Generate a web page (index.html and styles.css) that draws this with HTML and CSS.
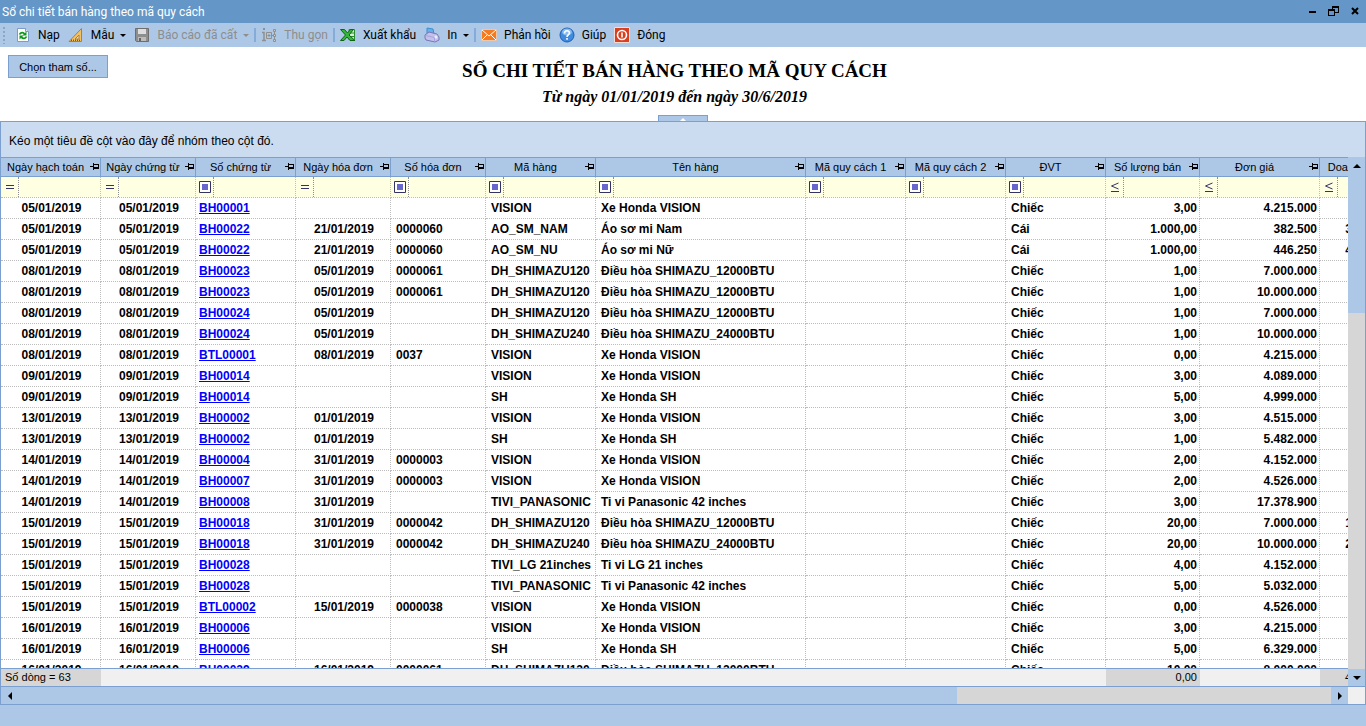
FILE: index.html
```html
<!DOCTYPE html>
<html lang="vi">
  <head>
    <meta charset="UTF-8" />
    <meta name="viewport" content="width=device-width, initial-scale=1.0" />
    <title>Sổ chi tiết bán hàng theo mã quy cách</title>
    <link rel="stylesheet" href="styles.css" />
  </head>
  <body>
    <header class="title-bar">
      <span class="title-text">Sổ chi tiết bán hàng theo mã quy cách</span>
      <div class="window-buttons">
        <button type="button" aria-label="Thu nhỏ">
          <svg width="12" height="12" viewBox="0 0 12 12"><path d="M2 5h7v2H2z" fill="#000" /></svg>
        </button>
        <button type="button" aria-label="Khôi phục">
          <svg width="12" height="12" viewBox="0 0 12 12" shape-rendering="crispEdges">
            <path d="M4 1h7v1H4zM4 0h7v1H4zM4 2h1v2H4zM10 2h1v5h-1zM7 6h4v1H7z" fill="#000" />
            <path d="M0 3h7v2H0zM0 5h1v5H0zM6 5h1v5H6zM0 9h7v1H0z" fill="#000" />
          </svg>
        </button>
        <button type="button" aria-label="Đóng cửa sổ">
          <svg width="12" height="12" viewBox="0 0 12 12"><path d="M3 2l6 6M9 2l-6 6" stroke="#000" stroke-width="2" /></svg>
        </button>
      </div>
    </header>

    <nav class="toolbar">
      <span class="grip"></span>
      <button type="button" class="tool">
        <svg width="16" height="16" viewBox="0 0 16 16">
          <path d="M2.500 1.500h8l3 3v10h-11z" fill="#fff" stroke="#7b9cc9" />
          <path d="M10.500 1.500v3h3" fill="#dce8f7" stroke="#7b9cc9" />
          <path d="M4.500 7.500c1-2.500 4-2.500 5 -.5M11.500 9.500c-1 2.500-4 2.500-5 .5" fill="none" stroke="#0a9a1a" stroke-width="1.800" />
          <path d="M11.500 4.500v4h-4zM4.500 12.500v-4h4z" fill="#0a9a1a" />
        </svg>
        <span>Nạp</span>
      </button>
      <button type="button" class="tool">
        <svg width="16" height="16" viewBox="0 0 16 16">
          <path d="M1 14.500L13.500 1.500v13z" fill="#f2c262" stroke="#bf7b25" />
          <path d="M7 12l4-4v4z" fill="#dfe3e0" stroke="#bf7b25" />
          <path d="M3.500 14v-1.500M5.500 14v-1.500M7.500 14v-1.500M9.500 14v-1.500M11.500 14v-1.500" stroke="#8a5414" />
        </svg>
        <span>Mẫu</span>
        <i class="caret"></i>
      </button>
      <button type="button" class="tool" disabled>
        <svg width="16" height="16" viewBox="0 0 16 16">
          <path d="M1.500 1.500h13v13h-12l-1-1z" fill="#8e8e8e" stroke="#6e6e6e" />
          <path d="M4 2h8v5H4z" fill="#dedede" />
          <path d="M4 10h8v4H4z" fill="#bcbcbc" />
          <path d="M5 11h2v3H5z" fill="#666" />
        </svg>
        <span>Báo cáo đã cất</span>
        <i class="caret"></i>
      </button>
      <span class="separator"></span>
      <button type="button" class="tool" disabled>
        <svg width="16" height="16" viewBox="0 0 16 16" fill="none" stroke="#8f8f8f">
          <path d="M2 1h2v2H2z" fill="#8f8f8f" stroke="none" />
          <path d="M1 5.500h2v8M1 13.500h4" stroke-width="1.500" />
          <path d="M5.500 5.500h5v6h-5zM6.500 8.500h3M8 7v3M11 8.500h2M13.500 4v9" />
          <path d="M12.500 2.500h2v2h-2zM12.500 7.500h2v2h-2zM12.500 12.500h2v2h-2z" fill="#d0d0d0" />
        </svg>
        <span>Thu gọn</span>
      </button>
      <span class="separator"></span>
      <button type="button" class="tool">
        <svg width="16" height="16" viewBox="0 0 16 16">
          <path d="M9 2.500h5.500v10H9z" fill="#d9efd5" stroke="#2a8c2e" />
          <path d="M9 6h6M9 9.500h6" stroke="#2a8c2e" />
          <path d="M.5 2.500h4l3 3.500 3-3.500h3L9 8l6 5.500h-5L7 10l-3 3.500H.5L5.500 8z" fill="#35b53a" stroke="#0f6416" />
        </svg>
        <span>Xuất khẩu</span>
      </button>
      <button type="button" class="tool">
        <svg width="16" height="16" viewBox="0 0 16 16">
          <path d="M3 1l6 1 1 5-7 1z" fill="#63b4ee" stroke="#3f8dcb" />
          <path d="M1 8l4-3 8 2 2 3v3l-4 2-9-2-1-2z" fill="#c3c1ec" stroke="#7776b5" />
          <path d="M1.500 8.500l9 2 4-2M10.500 10.500v4" fill="none" stroke="#a5a3dc" />
          <circle cx="12" cy="10" r="1.500" fill="#eeeefa" />
        </svg>
        <span>In</span>
        <i class="caret"></i>
      </button>
      <span class="separator"></span>
      <button type="button" class="tool">
        <svg width="16" height="16" viewBox="0 0 16 16">
          <path d="M.5 2.500h15v11H.5z" fill="#f47b20" stroke="#e8c9ae" />
          <path d="M1 3l7 6 7-6M1 13l5-5M15 13l-5-5" fill="none" stroke="#fff" />
        </svg>
        <span>Phản hồi</span>
      </button>
      <button type="button" class="tool">
        <svg width="16" height="16" viewBox="0 0 16 16">
          <circle cx="8" cy="8" r="7" fill="#3f8be0" stroke="#1f5fae" />
          <ellipse cx="8" cy="5" rx="5" ry="3.500" fill="#86bbf2" />
          <path d="M5.500 6.500c0-3.500 5-3.500 5-.5 0 1.500-2.500 1.800-2.500 4M8 11v1.800" fill="none" stroke="#fff" stroke-width="1.600" />
        </svg>
        <span>Giúp</span>
      </button>
      <button type="button" class="tool">
        <svg width="16" height="16" viewBox="0 0 16 16">
          <path d="M.5.5h15v15H.5z" fill="#d9401f" stroke="#f3ddd4" />
          <circle cx="8" cy="8" r="4.500" fill="none" stroke="#fff" stroke-width="1.600" />
          <path d="M8 5.500v5" stroke="#fff" stroke-width="1.600" />
        </svg>
        <span>Đóng</span>
      </button>
    </nav>

    <section class="report-head">
      <button type="button" class="btn-params">Chọn tham số...</button>
      <div class="report-title">
        <h1>SỔ CHI TIẾT BÁN HÀNG THEO MÃ QUY CÁCH</h1>
        <p>Từ ngày 01/01/2019 đến ngày 30/6/2019</p>
      </div>
      <button type="button" class="collapse" aria-label="Thu gọn tiêu đề"></button>
    </section>

    <main class="grid">
      <div class="group-panel">Kéo một tiêu đề cột vào đây để nhóm theo cột đó.</div>
      <div class="grid-body">
        <div class="grid-content">
          <div class="rows">
            <table class="data">
              <colgroup id="cols"></colgroup>
              <thead>
                <tr id="headRow"></tr>
                <tr id="filterRow" class="filter"></tr>
              </thead>
              <tbody id="dataRows"></tbody>
            </table>
          </div>
          <div class="summary">
            <span class="row-count">Số dòng = 63</span>
            <span class="sum-qty">0,00</span>
            <span class="sum-sales">4.893.620.000</span>
          </div>
        </div>
        <div class="scroll-y">
          <button type="button" aria-label="Cuộn lên"><i class="arrow up"></i></button>
          <div class="track"><div class="thumb"></div></div>
          <button type="button" aria-label="Cuộn xuống"><i class="arrow down"></i></button>
        </div>
      </div>
      <div class="scroll-x">
        <button type="button" aria-label="Cuộn trái"><i class="arrow left"></i></button>
        <div class="track"><div class="thumb"></div></div>
        <button type="button" aria-label="Cuộn phải"><i class="arrow right"></i></button>
        <div class="corner"></div>
      </div>
    </main>
    <footer class="status-bar"></footer>

    <script src="script.js"></script>
  </body>
</html>
```

FILE: styles.css
```css
:root {
  --title: #6496c8;
  --bar: #adc8e7;
  --panel: #cbdbf0;
  --line: #7b9fcf;
  --dots: #bdbdbd;
  --filter: #ffffe1;
}

* {
  box-sizing: border-box;
  margin: 0;
  padding: 0;
}

body {
  display: flex;
  flex-direction: column;
  height: 100vh;
  overflow: hidden;
  background: white;
  color: #000;
  font-family: "Liberation Sans", Arial, sans-serif;
  font-size: 12px;
}

button {
  border: none;
  background: none;
  color: inherit;
  font: inherit;
}

/* Title bar */
.title-bar {
  display: flex;
  align-items: center;
  justify-content: space-between;
  height: 23px;
  padding: 0 5px 0 2px;
  background: var(--title);
  color: white;
  font-family: Roboto, sans-serif;
}

.window-buttons {
  display: flex;
  gap: 9px;
}

.window-buttons button {
  width: 12px;
  height: 12px;
}

.window-buttons svg {
  display: block;
}

/* Toolbar */
.toolbar {
  display: flex;
  align-items: center;
  height: 24px;
  padding-left: 2px;
  background: var(--bar);
  font-family: Roboto, sans-serif;
}

.grip {
  width: 5px;
  height: 18px;
  margin-right: 4px;
  background: radial-gradient(circle, #8aa5c6 1px, transparent 1px) 0 0 / 4px 4px;
}

.tool {
  display: flex;
  align-items: center;
  height: 22px;
  padding: 0 4px;
  white-space: nowrap;
}

.tool span {
  margin-left: 7px;
}

.tool:disabled {
  color: #8d8d8d;
}

.caret {
  margin-left: 6px;
  border: 3px solid transparent;
  border-top-color: currentColor;
  border-bottom: none;
}

.separator {
  width: 2px;
  height: 14px;
  margin: 0 1px;
  background: #85abd9;
}

/* Report heading */
.report-head {
  position: relative;
  height: 74px;
}

.btn-params {
  position: absolute;
  left: 8px;
  top: 8px;
  width: 100px;
  height: 23px;
  border: 1px solid var(--line);
  background: var(--bar);
  font-size: 11px;
}

.report-title {
  padding: 13px 17px 0 0;
  font-family: "Liberation Serif", "Times New Roman", serif;
  text-align: center;
}

.report-title h1 {
  font-size: 19px;
  line-height: 22px;
}

.report-title p {
  margin-top: 6px;
  font-size: 16px;
  font-weight: bold;
  font-style: italic;
  line-height: 18px;
}

.collapse {
  position: absolute;
  bottom: 0;
  left: calc(50% - 25px);
  display: flex;
  justify-content: center;
  width: 50px;
  height: 6px;
  border: 1px solid var(--line);
  border-bottom: none;
  background: var(--bar);
}

.collapse::before {
  content: "";
  width: 0;
  border: 3px solid transparent;
  border-top: none;
  border-bottom-color: white;
}

/* Grid */
.grid {
  display: flex;
  flex: 1;
  flex-direction: column;
  min-height: 0;
  border: 1px solid var(--line);
}

.group-panel {
  height: 35px;
  padding: 0 8px;
  background: var(--panel);
  line-height: 38px;
}

.grid-body {
  display: flex;
  flex: 1;
  min-height: 0;
}

.grid-content {
  display: flex;
  flex: 1;
  flex-direction: column;
  min-width: 0;
}

.rows {
  flex: 1;
  min-height: 0;
  overflow: hidden;
}

.data {
  width: 1414px;
  border-collapse: separate;
  border-spacing: 0;
  table-layout: fixed;
}

.data th {
  height: 20px;
  border: 1px solid var(--line);
  border-left: none;
  background: var(--bar);
  font-size: 11px;
  font-weight: normal;
}

.th-inner {
  display: flex;
  align-items: center;
  white-space: nowrap;
}

.th-inner span {
  flex: 1;
}

.pin {
  flex: none;
}

.data td {
  height: 21px;
  padding: 0 2px 0 5px;
  border-right: 1px dotted var(--dots);
  border-bottom: 1px dotted var(--dots);
  overflow: hidden;
  font-weight: bold;
  line-height: 20px;
  white-space: nowrap;
}

.data td.date {
  padding: 0 0 0 2px;
  text-align: center;
}

.data td.link {
  padding-left: 3px;
}

.data td.num {
  text-align: right;
}

.data td a {
  color: #0000ff;
}

.data .filter td {
  padding: 0;
  background: var(--filter);
}

.filter-cell {
  display: flex;
  height: 20px;
}

.filter-cell button {
  display: flex;
  flex: none;
  align-items: center;
  width: 18px;
  padding-left: 3px;
  border-right: 1px dotted #8f8f8f;
  color: #333366;
}

.filter-cell input {
  flex: 1;
  min-width: 0;
  border: none;
  background: none;
  font: inherit;
}

/* Summary row */
.summary {
  display: grid;
  grid-template-columns: 100px 1005px 94px 120px 120px;
  height: 18px;
  border-top: 1px solid var(--line);
  background: #f0f0f0;
  font-size: 11px;
  line-height: 17px;
  overflow: hidden;
}

.row-count,
.sum-qty,
.sum-sales {
  padding: 0 3px 0 4px;
  background: #d6d6d6;
}

.sum-qty {
  grid-column: 3;
  text-align: right;
}

.sum-sales {
  grid-column: 5;
  padding-left: 25px;
}

/* Scroll bars */
.scroll-y,
.scroll-x {
  display: flex;
  flex: none;
}

.scroll-y {
  flex-direction: column;
  width: 17px;
}

.scroll-x {
  height: 18px;
  border-top: 1px solid var(--line);
}

.scroll-y button,
.scroll-x button {
  display: flex;
  align-items: center;
  justify-content: center;
  width: 17px;
  height: 17px;
  background: var(--bar);
}

.track {
  flex: 1;
  background: #d6d6d6;
}

.thumb {
  background: var(--bar);
}

.scroll-y .thumb {
  height: 28%;
}

.scroll-x .thumb {
  width: 71.5%;
  height: 17px;
}

.corner {
  width: 17px;
  background: #f0f0f0;
}

.arrow {
  border: 4px solid transparent;
}

.arrow.up {
  border-top: none;
  border-bottom-color: #000;
}

.arrow.down {
  border-bottom: none;
  border-top-color: #000;
}

.arrow.left {
  border-left: none;
  border-right-color: #000;
}

.arrow.right {
  border-right: none;
  border-left-color: #000;
}

.status-bar {
  height: 21px;
  background: var(--bar);
}
```

FILE: script.js
```javascript
const columns = [
  { title: "Ngày hạch toán", width: 100, type: "date", op: "eq" },
  { title: "Ngày chứng từ", width: 95, type: "date", op: "eq" },
  { title: "Số chứng từ", width: 100, type: "link", op: "box" },
  { title: "Ngày hóa đơn", width: 95, type: "date", op: "eq" },
  { title: "Số hóa đơn", width: 95, type: "text", op: "box" },
  { title: "Mã hàng", width: 110, type: "text", op: "box" },
  { title: "Tên hàng", width: 210, type: "text", op: "box" },
  { title: "Mã quy cách 1", width: 100, type: "text", op: "box" },
  { title: "Mã quy cách 2", width: 100, type: "text", op: "box" },
  { title: "ĐVT", width: 100, type: "text", op: "box" },
  { title: "Số lượng bán", width: 94, type: "num", op: "le" },
  { title: "Đơn giá", width: 120, type: "num", op: "le" },
  { title: "Doanh số bán", width: 95, type: "num", op: "le" },
];

// ngày hạch toán | số chứng từ | ngày hóa đơn | số hóa đơn | mã hàng | tên hàng | ĐVT | số lượng | đơn giá
const rows = [
  "05/01/2019|BH00001|||VISION|Xe Honda VISION|Chiếc|3,00|4.215.000",
  "05/01/2019|BH00022|21/01/2019|0000060|AO_SM_NAM|Áo sơ mi Nam|Cái|1.000,00|382.500",
  "05/01/2019|BH00022|21/01/2019|0000060|AO_SM_NU|Áo sơ mi Nữ|Cái|1.000,00|446.250",
  "08/01/2019|BH00023|05/01/2019|0000061|DH_SHIMAZU120|Điều hòa SHIMAZU_12000BTU|Chiếc|1,00|7.000.000",
  "08/01/2019|BH00023|05/01/2019|0000061|DH_SHIMAZU120|Điều hòa SHIMAZU_12000BTU|Chiếc|1,00|10.000.000",
  "08/01/2019|BH00024|05/01/2019||DH_SHIMAZU120|Điều hòa SHIMAZU_12000BTU|Chiếc|1,00|7.000.000",
  "08/01/2019|BH00024|05/01/2019||DH_SHIMAZU240|Điều hòa SHIMAZU_24000BTU|Chiếc|1,00|10.000.000",
  "08/01/2019|BTL00001|08/01/2019|0037|VISION|Xe Honda VISION|Chiếc|0,00|4.215.000",
  "09/01/2019|BH00014|||VISION|Xe Honda VISION|Chiếc|3,00|4.089.000",
  "09/01/2019|BH00014|||SH|Xe Honda SH|Chiếc|5,00|4.999.000",
  "13/01/2019|BH00002|01/01/2019||VISION|Xe Honda VISION|Chiếc|3,00|4.515.000",
  "13/01/2019|BH00002|01/01/2019||SH|Xe Honda SH|Chiếc|1,00|5.482.000",
  "14/01/2019|BH00004|31/01/2019|0000003|VISION|Xe Honda VISION|Chiếc|2,00|4.152.000",
  "14/01/2019|BH00007|31/01/2019|0000003|VISION|Xe Honda VISION|Chiếc|2,00|4.526.000",
  "14/01/2019|BH00008|31/01/2019||TIVI_PANASONIC|Ti vi Panasonic 42 inches|Chiếc|3,00|17.378.900",
  "15/01/2019|BH00018|31/01/2019|0000042|DH_SHIMAZU120|Điều hòa SHIMAZU_12000BTU|Chiếc|20,00|7.000.000",
  "15/01/2019|BH00018|31/01/2019|0000042|DH_SHIMAZU240|Điều hòa SHIMAZU_24000BTU|Chiếc|20,00|10.000.000",
  "15/01/2019|BH00028|||TIVI_LG 21inches|Ti vi LG 21 inches|Chiếc|4,00|4.152.000",
  "15/01/2019|BH00028|||TIVI_PANASONIC|Ti vi Panasonic 42 inches|Chiếc|5,00|5.032.000",
  "15/01/2019|BTL00002|15/01/2019|0000038|VISION|Xe Honda VISION|Chiếc|0,00|4.526.000",
  "16/01/2019|BH00006|||VISION|Xe Honda VISION|Chiếc|3,00|4.215.000",
  "16/01/2019|BH00006|||SH|Xe Honda SH|Chiếc|5,00|6.329.000",
  "16/01/2019|BH00029|16/01/2019|0000061|DH_SHIMAZU120|Điều hòa SHIMAZU_12000BTU|Chiếc|10,00|8.000.000",
];

const pin =
  '<svg class="pin" width="10" height="8" viewBox="0 0 10 8" shape-rendering="crispEdges"><path d="M0 3h3v1H0zM3 0h1v7H3zM4 1h5v1H4zM4 4h5v2H4zM8 1h1v5H8z"/></svg>';

const operators = {
  eq: '<svg width="12" height="12" viewBox="0 0 12 12"><path d="M2 4h8v1H2zM2 7h8v1H2z" fill="#333366"/></svg>',
  box: '<svg width="12" height="12" viewBox="0 0 12 12"><path d="M.5.5h11v11H.5z" fill="#fff" stroke="#333366"/><path d="M3 3h6v6H3z" fill="#6666cc"/></svg>',
  le: '<svg width="12" height="12" viewBox="0 0 12 12" fill="none" stroke="#333366"><path d="M9.500 2l-7 3 7 3M2 10.500h8"/></svg>',
};

const toNumber = (text) => Number(text.replace(/\./g, "").replace(",", "."));

document.getElementById("cols").innerHTML = columns
  .map((c) => `<col style="width: ${c.width}px">`)
  .join("");

document.getElementById("headRow").innerHTML = columns
  .map((c) => `<th><div class="th-inner"><span>${c.title}</span>${pin}</div></th>`)
  .join("");

document.getElementById("filterRow").innerHTML = columns
  .map(
    (c) =>
      `<td><div class="filter-cell"><button type="button" aria-label="Điều kiện lọc">${operators[c.op]}</button><input type="text" aria-label="${c.title}"></div></td>`
  )
  .join("");

document.getElementById("dataRows").innerHTML = rows
  .map((line) => {
    const [date, no, invDate, invNo, code, name, unit, qty, price] = line.split("|");
    const sales = String(toNumber(qty) * toNumber(price)).replace(/\B(?=(\d{3})+$)/g, ".");
    const cells = [date, date, no, invDate, invNo, code, name, "", "", unit, qty, price, sales];
    return `<tr>${cells
      .map((value, i) => {
        const type = columns[i].type;
        const content = type === "link" ? `<a href="#">${value}</a>` : value;
        return `<td class="${type}">${content}</td>`;
      })
      .join("")}</tr>`;
  })
  .join("");
```
